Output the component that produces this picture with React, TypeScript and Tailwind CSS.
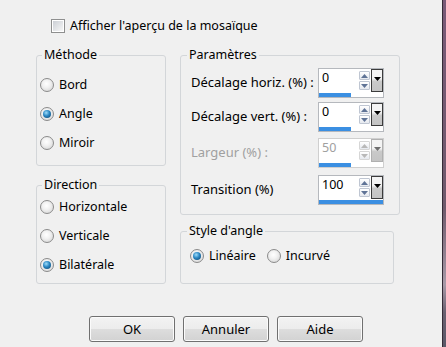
import React from "react";

const Tri = ({ dir, color }: { dir: "up" | "down"; color: string }) => (
  <svg width="7" height="4" viewBox="0 0 7 4" className="block">
    {dir === "up" ? <path d="M3.5 0L7 4H0z" fill={color} /> : <path d="M0 0h7L3.5 4z" fill={color} />}
  </svg>
);

const Radio = ({ checked }: { checked?: boolean }) => (
  <span className="flex h-[14px] w-[14px] shrink-0 items-center justify-center rounded-full border border-[#8b8b8b] bg-[radial-gradient(circle_at_45%_40%,#ffffff_0%,#f1f1f1_40%,#cfcfcf_100%)]">
    {checked && (
      <span className="h-[8px] w-[8px] rounded-full bg-[radial-gradient(circle_at_40%_35%,#9ddcfa_0%,#2a86c2_45%,#0c3f66_100%)]" />
    )}
  </span>
);

const RadioRow = ({ label, checked }: { label: string; checked?: boolean }) => (
  <div className="flex h-[16px] items-center">
    <Radio checked={checked} />
    <span className="ml-[5px] leading-[16px]">{label}</span>
  </div>
);

const Spin = ({ value, pct, disabled }: { value: string; pct: number; disabled?: boolean }) => (
  <div
    className={`flex h-[30px] w-[66px] flex-col border bg-white ${disabled ? "border-[#cfcfcf]" : "border-[#b5b8bd]"}`}
  >
    <div className="flex h-[23px]">
      <span className={`flex-1 pl-[3px] leading-[17px] ${disabled ? "text-[#a0a0a0]" : "text-black"}`}>{value}</span>
      <div className="mr-[1px] mt-[2px] flex w-[11px] flex-col gap-[1px]">
        <div
          className={`flex h-[9px] items-center justify-center rounded-[1px] border bg-[linear-gradient(#ffffff,#e6e9ef)] ${disabled ? "border-[#d6d6d6]" : "border-[#bfc6d2]"}`}
        >
          <Tri dir="up" color={disabled ? "#b8b8b8" : "#5f7396"} />
        </div>
        <div
          className={`flex h-[9px] items-center justify-center rounded-[1px] border bg-[linear-gradient(#ffffff,#e6e9ef)] ${disabled ? "border-[#d6d6d6]" : "border-[#bfc6d2]"}`}
        >
          <Tri dir="down" color={disabled ? "#b8b8b8" : "#5f7396"} />
        </div>
      </div>
      <div
        className={`flex w-[12px] flex-col items-center border bg-[linear-gradient(#f4f4f4_0%,#f4f4f4_40%,#c9c9c9_55%,#c4c4c4_100%)] ${disabled ? "border-[#b0b0b0]" : "border-[#3c3c3c]"}`}
      >
        <div className="mt-[7px]">
          <Tri dir="down" color={disabled ? "#6e6e6e" : "#000000"} />
        </div>
      </div>
    </div>
    <div className="mt-[1px] h-[4px]">
      <div className="h-full bg-[#3b8fe2]" style={{ width: `${pct}%` }} />
    </div>
  </div>
);

const ParamRow = ({
  label,
  value,
  pct,
  disabled,
  className,
}: {
  label: string;
  value: string;
  pct: number;
  disabled?: boolean;
  className?: string;
}) => (
  <div className={`flex items-center justify-between ${className ?? ""}`}>
    <span className={`text-[13px] ${disabled ? "text-[#a0a0a0]" : "text-black"}`}>{label}</span>
    <Spin value={value} pct={pct} disabled={disabled} />
  </div>
);

const Btn = ({ label }: { label: string }) => (
  <button className="h-[26px] w-[86px] rounded-[3px] border border-[#707070] bg-[linear-gradient(#f3f3f3_0%,#ececec_50%,#dddddd_51%,#d2d2d2_100%)] text-[13px] leading-[24px] text-black shadow-[inset_0_0_0_1px_#fbfbfb]">
    {label}
  </button>
);

export default function App() {
  return (
    <div className="flex h-[347px] w-[446px] bg-[#f0f0f0] font-['Noto_Sans',sans-serif] text-[12.5px] text-black">
      <div className="flex w-[442px] flex-col">
        {/* top checkbox */}
        <div className="flex items-center pl-[51px] pt-[18px]">
          <span className="flex h-[14px] w-[14px] items-center justify-center border border-[#8e8f8f] bg-white">
            <span className="h-[10px] w-[10px] bg-[linear-gradient(135deg,#cbcfd5,#f7f7f7)]" />
          </span>
          <span className="ml-[5px] leading-[16px]">Afficher l'aperçu de la mosaïque</span>
        </div>

        <div className="mt-[13px] flex pl-[36px]">
          {/* left column */}
          <div className="flex w-[130px] flex-col">
            <fieldset className="rounded-[3px] border border-[#d3d6d9]">
              <legend className="ml-[5px] px-[2px] leading-[16px]">Méthode</legend>
              <div className="flex flex-col gap-[13px] pb-[14px] pl-[3px] pt-[14px]">
                <RadioRow label="Bord" />
                <RadioRow label="Angle" checked />
                <RadioRow label="Miroir" />
              </div>
            </fieldset>
            <fieldset className="mt-[11px] rounded-[3px] border border-[#d3d6d9]">
              <legend className="ml-[5px] px-[2px] leading-[16px]">Direction</legend>
              <div className="flex flex-col gap-[13px] pb-[10px] pl-[3px] pt-[6px]">
                <RadioRow label="Horizontale" />
                <RadioRow label="Verticale" />
                <RadioRow label="Bilatérale" checked />
              </div>
            </fieldset>
          </div>

          {/* right column */}
          <div className="ml-[14px] flex w-[220px] flex-col">
            <fieldset className="rounded-[3px] border border-[#d3d6d9]">
              <legend className="ml-[6px] px-[2px] leading-[16px]">Paramètres</legend>
              <div className="flex flex-col pb-[9px] pl-[10px] pr-[15px] pt-[5px]">
                <ParamRow label="Décalage horiz. (%) :" value="0" pct={50} />
                <ParamRow className="mt-[4px]" label="Décalage vert. (%) :" value="0" pct={50} />
                <ParamRow className="mt-[6px]" label="Largeur (%) :" value="50" pct={50} disabled />
                <ParamRow className="mt-[7px]" label="Transition (%)" value="100" pct={100} />
              </div>
            </fieldset>
            <fieldset className="mr-[6px] mt-[8px] rounded-[3px] border border-[#d3d6d9]">
              <legend className="ml-[6px] px-[2px] leading-[16px]">Style d'angle</legend>
              <div className="flex items-center pb-[19px] pl-[9px] pt-[9px]">
                <RadioRow label="Linéaire" checked />
                <div className="ml-[11px]">
                  <RadioRow label="Incurvé" />
                </div>
              </div>
            </fieldset>
          </div>
        </div>

        <div className="mb-[5px] mt-auto flex gap-[8px] pl-[89px]">
          <Btn label="OK" />
          <Btn label="Annuler" />
          <Btn label="Aide" />
        </div>
      </div>
      <div className="w-[1px] bg-[#352b36]" />
      <div className="w-[3px] bg-[linear-gradient(#7a5a78_0%,#6f5a6c_60%,#a89aa8_82%,#6a6070_90%,#5a5868_100%)]" />
    </div>
  );
}
